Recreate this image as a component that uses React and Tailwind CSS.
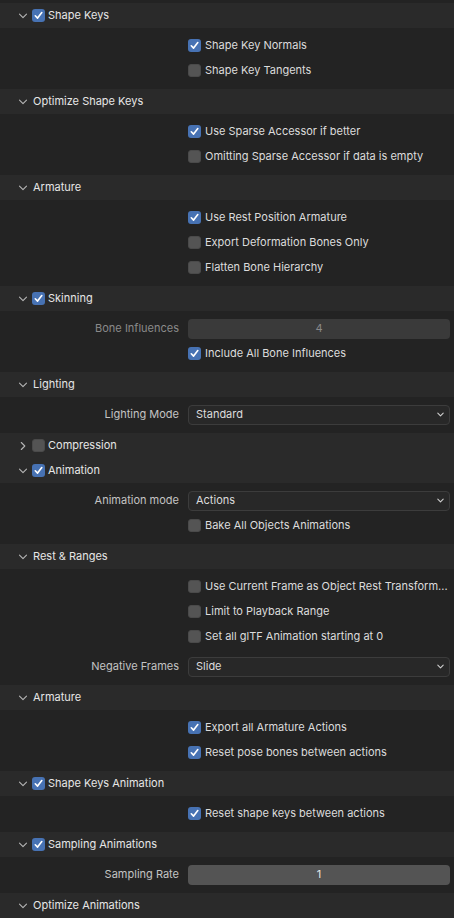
import React from 'react';

const sections = [
  { title: 'Shape Keys', check: true, rows: [
    { type: 'check', label: 'Shape Key Normals', on: true },
    { type: 'check', label: 'Shape Key Tangents' },
  ] },
  { title: 'Optimize Shape Keys', rows: [
    { type: 'check', label: 'Use Sparse Accessor if better', on: true },
    { type: 'check', label: 'Omitting Sparse Accessor if data is empty' },
  ] },
  { title: 'Armature', rows: [
    { type: 'check', label: 'Use Rest Position Armature', on: true },
    { type: 'check', label: 'Export Deformation Bones Only' },
    { type: 'check', label: 'Flatten Bone Hierarchy' },
  ] },
  { title: 'Skinning', check: true, rows: [
    { type: 'number', label: 'Bone Influences', value: '4', disabled: true },
    { type: 'check', label: 'Include All Bone Influences', on: true },
  ] },
  { title: 'Lighting', rows: [
    { type: 'select', label: 'Lighting Mode', value: 'Standard' },
  ] },
  { title: 'Compression', check: false, closed: true },
  { title: 'Animation', check: true, rows: [
    { type: 'select', label: 'Animation mode', value: 'Actions' },
    { type: 'check', label: 'Bake All Objects Animations' },
  ] },
  { title: 'Rest & Ranges', rows: [
    { type: 'check', label: 'Use Current Frame as Object Rest Transform...' },
    { type: 'check', label: 'Limit to Playback Range' },
    { type: 'check', label: 'Set all glTF Animation starting at 0' },
    { type: 'select', label: 'Negative Frames', value: 'Slide', spaced: true },
  ] },
  { title: 'Armature', rows: [
    { type: 'check', label: 'Export all Armature Actions', on: true },
    { type: 'check', label: 'Reset pose bones between actions', on: true },
  ] },
  { title: 'Shape Keys Animation', check: true, rows: [
    { type: 'check', label: 'Reset shape keys between actions', on: true },
  ] },
  { title: 'Sampling Animations', check: true, rows: [
    { type: 'number', label: 'Sampling Rate', value: '1' },
  ] },
  { title: 'Optimize Animations', rows: [] },
];

function Checkbox({ on }) {
  return on ? (
    <span className="flex h-[13px] w-[13px] shrink-0 items-center justify-center rounded-[3px] bg-[#4772b3]">
      <svg viewBox="0 0 12 12" className="h-[11px] w-[11px]" fill="none" stroke="#fff" strokeWidth="1.8" strokeLinecap="round" strokeLinejoin="round">
        <path d="M2.5 6.3 L5 8.8 L9.6 2.8" />
      </svg>
    </span>
  ) : (
    <span className="h-[13px] w-[13px] shrink-0 rounded-[3px] border border-[#4a4a4a] bg-[#545454]" />
  );
}

function Chevron({ open }) {
  return (
    <svg viewBox="0 0 10 10" className="h-[10px] w-[10px]" fill="none" stroke="#b5b5b5" strokeWidth="1.1" strokeLinecap="round" strokeLinejoin="round">
      {open ? <path d="M1.5 3.2 L5 6.7 L8.5 3.2" /> : <path d="M3.3 1.5 L6.8 5 L3.3 8.5" />}
    </svg>
  );
}

function Row({ row }) {
  if (row.type === 'check') {
    return (
      <div className="flex h-[25px] items-center pl-[188px]">
        <Checkbox on={row.on} />
        <span className="ml-[4px] whitespace-nowrap text-[#dcdcdc]">{row.label}</span>
      </div>
    );
  }
  return (
    <div className={`flex h-[25px] items-center ${row.spaced ? 'mt-[5px]' : ''}`}>
      <div className={`w-[180px] shrink-0 pr-[1px] text-right ${row.disabled ? 'text-[#8a8a8a]' : 'text-[#c4c4c4]'}`}>
        {row.label}
      </div>
      <div className="ml-[8px] mr-[4px] flex-1">
        {row.type === 'select' ? (
          <div className="flex h-[20px] items-center justify-between rounded-[4px] border border-[#3c3c3c] bg-[#282828] pl-[7px] pr-[4px] text-[#dcdcdc]">
            <span>{row.value}</span>
            <svg viewBox="0 0 10 10" className="h-[9px] w-[9px]" fill="none" stroke="#cfcfcf" strokeWidth="1.2" strokeLinecap="round" strokeLinejoin="round">
              <path d="M2 3.5 L5 6.5 L8 3.5" />
            </svg>
          </div>
        ) : (
          <div className={`flex h-[20px] items-center justify-center rounded-[4px] ${row.disabled ? 'bg-[#3a3a3a] text-[#8a8a8a]' : 'bg-[#545454] text-[#e6e6e6]'}`}>
            {row.value}
          </div>
        )}
      </div>
    </div>
  );
}

function Section({ s }) {
  const open = !s.closed;
  return (
    <div>
      <div className="flex h-[25px] items-center bg-[#2a2a2a] pl-[18px] text-[#e6e6e6]">
        <Chevron open={open} />
        {s.check !== undefined ? (
          <span className="ml-[4px] flex items-center">
            <Checkbox on={s.check} />
            <span className="ml-[3px]">{s.title}</span>
          </span>
        ) : (
          <span className="ml-[5px]">{s.title}</span>
        )}
      </div>
      {open && s.rows && s.rows.length > 0 && (
        <div className="pb-[6px] pt-[5px]">
          {s.rows.map((r, i) => (
            <Row key={i} row={r} />
          ))}
        </div>
      )}
    </div>
  );
}

export default function App() {
  return (
    <div className="h-[918px] w-[454px] overflow-hidden bg-[#232323] pt-[3px] text-[11px] leading-[1.4] [font-family:Inter,'Noto_Sans',sans-serif]">
      {sections.map((s, i) => (
        <Section key={i} s={s} />
      ))}
    </div>
  );
}
